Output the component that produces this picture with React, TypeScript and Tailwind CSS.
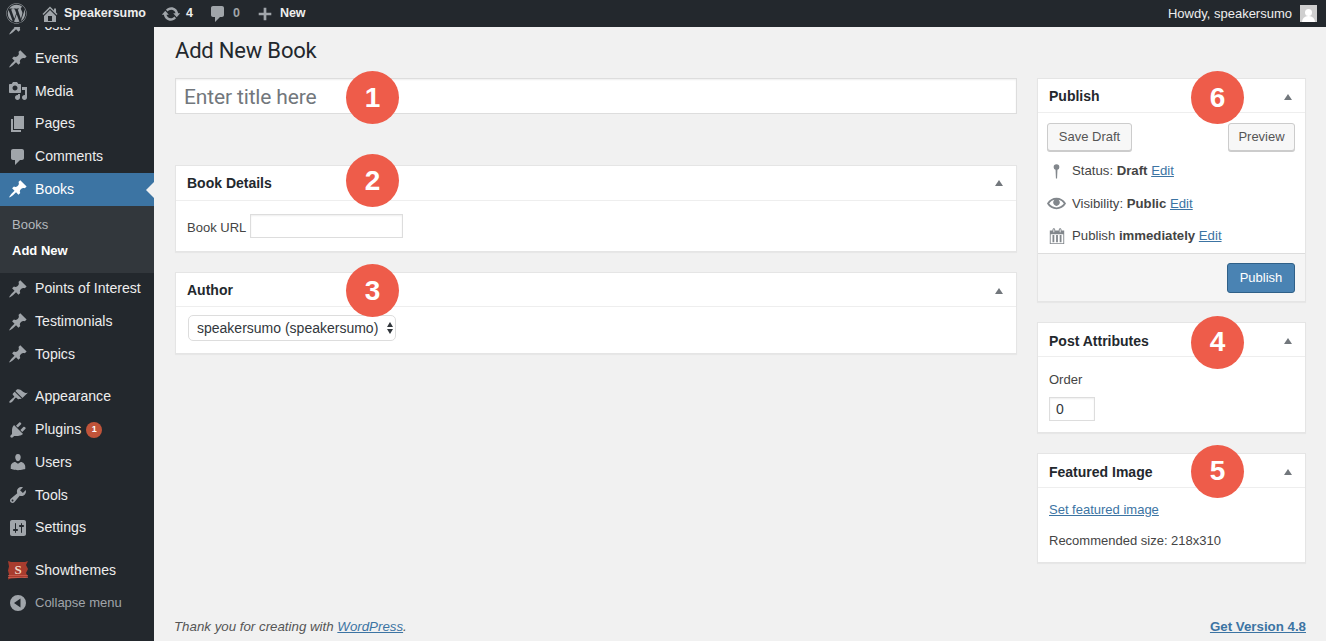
import React from "react";
import { FaWordpress } from "react-icons/fa";

const icons = {
  pin: "M10.44 3.02l1.82-1.82 6.36 6.35-1.83 1.82c-1.05-.68-2.48-.57-3.41.36l-.75.75c-.92.93-1.04 2.35-.35 3.41l-1.83 1.82-2.41-2.41-2.8 2.79c-.42.42-3.38 2.71-3.8 2.29s1.86-3.39 2.28-3.81l2.79-2.79L4.1 9.36l1.83-1.82c1.05.69 2.48.57 3.4-.36l.75-.75c.93-.92 1.05-2.35.36-3.41z",
  media: "M13 11V4c0-.55-.45-1-1-1h-1.67L9 1H5L3.67 3H2c-.55 0-1 .45-1 1v7c0 .55.45 1 1 1h10c.55 0 1-.45 1-1zM7 4.5c1.38 0 2.5 1.12 2.5 2.5S8.38 9.5 7 9.5 4.5 8.38 4.5 7 5.62 4.5 7 4.5zM14 6h5v10.5c0 1.38-1.12 2.5-2.5 2.5S14 17.88 14 16.5s1.12-2.5 2.5-2.5c.17 0 .34.02.5.05V9h-3V6zm-4 8.05V13h2v3.5c0 1.38-1.12 2.5-2.5 2.5S7 17.88 7 16.5 8.12 14 9.5 14c.17 0 .34.02.5.05z",
  page: "M6 15V2h10v13H6zm-1 1h8v2H3V5h2v11z",
  comment: "M5 2h9c1.1 0 2 .9 2 2v7c0 1.1-.9 2-2 2h-2l-5 5v-5H5c-1.1 0-2-.9-2-2V4c0-1.1.9-2 2-2z",
  brush: "M14.48 11.06L7.41 3.99l1.5-1.5c.5-.56 2.3-.47 3.51.32 1.21.8 1.43 1.28 2.91 2.1 1.18.64 2.45 1.26 4.45.85zm-.71.71L6.7 4.7 4.93 6.47c-.39.39-.39 1.02 0 1.41l1.06 1.06c.39.39.39 1.03 0 1.42-.6.6-1.43 1.11-2.21 1.69-.35.26-.7.53-1.01.84C1.43 13.71.96 15.12 1.37 15.53c.41.41 1.84-.06 3.36-1.38.3-.31.57-.66.84-1.01.57-.78 1.08-1.61 1.69-2.21.39-.39 1.02-.39 1.41 0l1.06 1.06c.39.39 1.02.39 1.41 0z",
  plugin: "M13.11 4.36L9.87 7.6 8 5.73l3.24-3.24c.35-.34 1.05-.2 1.56.32.52.51.66 1.21.31 1.55zm-8 1.77l.91-1.12 9.01 9.01-1.19.84c-.71.71-2.63 1.16-3.82 1.16H6.14L4.9 17.26c-.59.59-1.54.59-2.12 0-.59-.58-.59-1.53 0-2.12l1.24-1.24v-3.88c0-1.13.4-3.19 1.09-3.89zm7.26 3.97l3.24-3.24c.34-.35 1.04-.21 1.55.31.52.51.66 1.21.31 1.55l-3.24 3.25z",
  users: "M10 9.25c-2.27 0-2.73-3.44-2.73-3.44C7 4.02 7.82 2 9.97 2c2.16 0 2.98 2.02 2.71 3.81 0 0-.41 3.44-2.68 3.44zm0 2.57L12.72 10c2.39 0 4.52 2.33 4.52 4.53v2.49s-3.65 1.13-7.24 1.13c-3.65 0-7.24-1.13-7.24-1.13v-2.49c0-2.25 1.94-4.48 4.47-4.48z",
  tools: "M16.68 9.77c-1.34 1.34-3.3 1.67-4.95.99l-5.41 6.52c-.99.99-2.59.99-3.58 0s-.99-2.59 0-3.57l6.52-5.42c-.68-1.65-.35-3.61.99-4.95 1.28-1.28 3.12-1.62 4.72-1.06l-2.89 2.89 2.82 2.82 2.86-2.87c.53 1.58.18 3.39-1.08 4.65zM3.81 16.21c.4.39 1.04.39 1.43 0 .4-.4.4-1.04 0-1.43-.39-.4-1.03-.4-1.43 0-.39.39-.39 1.03 0 1.43z",
  settings: "M18 16V4c0-1.1-.9-2-2-2H4c-1.1 0-2 .9-2 2v12c0 1.1.9 2 2 2h12c1.1 0 2-.9 2-2zM8 11h1c.55 0 1 .45 1 1s-.45 1-1 1H8v1.5c0 .28-.22.5-.5.5s-.5-.22-.5-.5V13H6c-.55 0-1-.45-1-1s.45-1 1-1h1V5.5c0-.28.22-.5.5-.5s.5.22.5.5V11zm5-2h-1c-.55 0-1-.45-1-1s.45-1 1-1h1V5.5c0-.28.22-.5.5-.5s.5.22.5.5V7h1c.55 0 1 .45 1 1s-.45 1-1 1h-1v5.5c0 .28-.22.5-.5.5s-.5-.22-.5-.5V9z",
  home: "M16 8.5l1.53 1.53-1.06 1.06L10 4.62l-6.47 6.47-1.06-1.06L10 2.5l4 4v-2h2v4zm-6-2.46l6 5.99V18H4v-5.97zM12 17v-5H8v5h4z",
  update: "M10.2 3.28c3.53 0 6.43 2.61 6.92 6h2.08l-3.5 4-3.5-4h2.32c-.45-1.97-2.21-3.45-4.32-3.45-1.45 0-2.73.71-3.54 1.78L4.95 5.66C6.23 4.2 8.11 3.28 10.2 3.28zm-.4 13.44c-3.52 0-6.43-2.61-6.92-6H.8l3.5-4c1.17 1.33 2.33 2.67 3.5 4H5.48c.45 1.97 2.21 3.45 4.32 3.45 1.45 0 2.73-.71 3.54-1.78l1.71 1.95c-1.28 1.46-3.15 2.38-5.25 2.38z",
  plus: "M17 8.5v3h-5.5V17h-3v-5.5H3v-3h5.5V3h3v5.5z",
  eye: "M19.7 9.4C17.7 6 14 3.9 10 3.9S2.3 6 .3 9.4L0 10l.3.6c2 3.4 5.7 5.5 9.7 5.5s7.7-2.1 9.7-5.5l.3-.6-.3-.6zM10 14.1c-3.1 0-6-1.6-7.7-4.1C3.6 8 5.7 6.6 8 6.1c-.9.6-1.5 1.7-1.5 2.9 0 1.9 1.6 3.5 3.5 3.5s3.5-1.6 3.5-3.5c0-1.2-.6-2.3-1.5-2.9 2.3.5 4.4 1.9 5.7 3.9-1.7 2.5-4.6 4.1-7.7 4.1z",
  calendar: "M15 4h3v15H2V4h3V3c0-.41.15-.76.44-1.06.29-.29.65-.44 1.06-.44s.77.15 1.06.44c.29.3.44.65.44 1.06v1h4V3c0-.41.15-.76.44-1.06.29-.29.65-.44 1.06-.44s.77.15 1.06.44c.29.3.44.65.44 1.06v1zM6 3v2.5c0 .14.05.26.15.36.09.09.21.14.35.14s.26-.05.35-.14c.1-.1.15-.22.15-.36V3c0-.14-.05-.26-.15-.35-.09-.1-.21-.15-.35-.15s-.26.05-.35.15c-.1.09-.15.21-.15.35zm7 0v2.5c0 .14.05.26.14.36.1.09.22.14.36.14s.26-.05.36-.14c.09-.1.14-.22.14-.36V3c0-.14-.05-.26-.14-.35-.1-.1-.22-.15-.36-.15s-.26.05-.36.15c-.09.09-.14.21-.14.35zm4 15V8H3v10h14zM5 9h2v8H5zm4 0h2v8H9zm4 0h2v8h-2z",
  pushpin: "M7 6a3 3 0 1 1 6 0 3 3 0 0 1-2 2.8L10.6 18H9.400L9 8.800A3 3 0 0 1 7 6z",
  collapse: "M10 2a8 8 0 1 1 0 16 8 8 0 0 1 0-16zm2.5 3.500L6 10l6.500 4.500z",
};

type IconName = keyof typeof icons;

const Icon = ({ name, className }: { name: IconName; className: string }) => (
  <svg viewBox="0 0 20 20" fill="currentColor" fillRule="evenodd" className={className}>
    <path d={icons[name]} />
  </svg>
);

const MenuItem = ({ icon, label, active, badge }: { icon: IconName; label: string; active?: boolean; badge?: string }) => (
  <div className={`relative flex h-[32.7px] items-center text-[14.1px] ${active ? "bg-[#3c74a3] text-white" : "text-[#eeeeee]"}`}>
    <div className="flex w-[35px] shrink-0 justify-center pl-[1px]">
      <Icon name={icon} className={`size-5 ${active ? "text-white" : "text-[#a0a5aa]"}`} />
    </div>
    <span>{label}</span>
    {badge && (
      <span className="ml-[5px] flex size-[16px] items-center justify-center rounded-full bg-[#c1543a] text-[9px] font-bold text-white">
        {badge}
      </span>
    )}
    {active && (
      <div className="absolute right-0 top-[9px] size-0 border-y-[8px] border-r-[8px] border-y-transparent border-r-[#f1f1f1]" />
    )}
  </div>
);

const Sidebar = () => (
  <aside className="flex w-[154px] shrink-0 flex-col overflow-hidden bg-[#23282d]">
    <div className="-mt-[17.5px]">
      <MenuItem icon="pin" label="Posts" />
    </div>
    <MenuItem icon="pin" label="Events" />
    <MenuItem icon="media" label="Media" />
    <MenuItem icon="page" label="Pages" />
    <MenuItem icon="comment" label="Comments" />
    <MenuItem icon="pin" label="Books" active />
    <div className="flex h-[67px] flex-col bg-[#32373c] pl-3 pt-[8px] text-[13px]">
      <div className="h-[26px] leading-[22px] text-[#b4b9be]">Books</div>
      <div className="font-bold leading-[22px] text-white">Add New</div>
    </div>
    <MenuItem icon="pin" label="Points of Interest" />
    <MenuItem icon="pin" label="Testimonials" />
    <MenuItem icon="pin" label="Topics" />
    <div className="h-[10px]" />
    <MenuItem icon="brush" label="Appearance" />
    <MenuItem icon="plugin" label="Plugins" badge="1" />
    <MenuItem icon="users" label="Users" />
    <MenuItem icon="tools" label="Tools" />
    <MenuItem icon="settings" label="Settings" />
    <div className="h-[10px]" />
    <div className="flex h-[32.7px] items-center text-[14px] text-[#eeeeee]">
      <div className="flex w-[35px] shrink-0 justify-center">
        <svg viewBox="0 0 20 20" className="size-5">
          <path d="M0 1l3 1h14l3-1-2 4 2 4-2 4 2 4-3 1-3-.5-4 .5-7 .5-3 1 1-5-1-4 1-4z" fill="#a83c2e" />
          <path d="M0 15.5h20M0 17.5h20" stroke="#d9695a" strokeWidth="0.6" />
          <text x="10" y="14" textAnchor="middle" fontFamily="Liberation Serif" fontWeight="700" fontSize="13" fill="#f0d9c8">
            S
          </text>
        </svg>
      </div>
      <span>Showthemes</span>
    </div>
    <div className="flex h-[32.7px] items-center text-[13px] text-[#a0a5aa]">
      <div className="flex w-[35px] shrink-0 justify-center">
        <Icon name="collapse" className="size-5 text-[#a0a5aa]" />
      </div>
      <span>Collapse menu</span>
    </div>
  </aside>
);

const TopBar = () => (
  <header className="flex h-[27px] shrink-0 items-center justify-between bg-[#23282d] text-[12.5px] text-[#eeeeee]">
    <div className="flex items-center">
      <FaWordpress className="ml-[6px] size-[21px] text-[#a0a5aa]" />
      <Icon name="home" className="ml-[13px] size-5 text-[#a0a5aa]" />
      <span className="ml-[4px] font-bold">Speakersumo</span>
      <Icon name="update" className="ml-[15px] size-5 text-[#a0a5aa]" />
      <span className="ml-[5px] font-bold">4</span>
      <Icon name="comment" className="ml-[15px] size-5 text-[#a0a5aa]" />
      <span className="ml-[5px] font-bold text-[#a0a5aa]">0</span>
      <Icon name="plus" className="ml-[16px] size-[18px] text-[#a0a5aa]" />
      <span className="ml-[6px] font-bold">New</span>
    </div>
    <div className="flex items-center pr-[9px]">
      <span className="text-[13px]">Howdy, speakersumo</span>
      <div className="ml-[8px] flex size-[17px] flex-col items-center justify-end overflow-hidden bg-[#cfcfcf]">
        <div className="size-[7px] rounded-full bg-white" />
        <div className="h-[6px] w-[13px] rounded-t-full bg-white" />
      </div>
    </div>
  </header>
);

const Badge = ({ n, left, top }: { n: number; left: string; top: string }) => (
  <div className={`absolute z-10 flex size-[53px] items-center justify-center rounded-full bg-[#ee5c4a] text-[28px] font-bold text-white ${left} ${top}`}>
    {n}
  </div>
);

const Card = ({ title, children, badge, headerH = "h-[34px] pt-[2px]" }: { title: string; children: React.ReactNode; badge: React.ReactNode; headerH?: string }) => (
  <section className="relative border border-[#e5e5e5] bg-white shadow-[0_1px_1px_rgba(0,0,0,0.04)]">
    <div className={`flex items-center justify-between border-b border-[#eeeeee] pl-[11px] pr-[13px] ${headerH}`}>
      <h2 className="text-[14px] font-bold text-[#23282d]">{title}</h2>
      <div className="size-0 border-x-[4px] border-b-[6px] border-x-transparent border-b-[#72777c]" />
    </div>
    {badge}
    {children}
  </section>
);

const Button = ({ children, className }: { children: React.ReactNode; className: string }) => (
  <button className={`h-[28px] rounded-[3px] border border-[#cccccc] bg-[#f7f7f7] text-[13px] text-[#555555] shadow-[0_1px_0_#cccccc] ${className}`}>
    {children}
  </button>
);

const Link = ({ children }: { children: React.ReactNode }) => <a className="text-[#3c74a3] underline">{children}</a>;

const StatusRow = ({ icon, iconClass, children }: { icon: IconName; iconClass: string; children: React.ReactNode }) => (
  <div className="flex h-[32.5px] items-center text-[13.2px] text-[#444444]">
    <div className="mr-[6px] flex w-[19px] shrink-0 justify-center">
      <Icon name={icon} className={`text-[#82878c] ${iconClass}`} />
    </div>
    <span className="whitespace-nowrap">{children}</span>
  </div>
);

const LeftColumn = () => (
  <div className="flex w-[842px] shrink-0 flex-col">
    <div className="relative">
      <input
        placeholder="Enter title here"
        className="h-[36px] w-full border border-[#dddddd] bg-white px-2 pt-[2px] font-['Roboto',sans-serif] text-[21px] tracking-[-0.15px] shadow-[inset_0_1px_2px_rgba(0,0,0,0.07)] placeholder:text-[#72777c]"
      />
      <Badge n={1} left="left-[171px]" top="-top-[7px]" />
    </div>
    <div className="mt-[51px] flex flex-col gap-5">
      <Card title="Book Details" headerH="h-[35px]" badge={<Badge n={2} left="left-[170px]" top="-top-[12px]" />}>
        <div className="flex h-[50px] items-center pl-[11px] text-[13px] text-[#444444]">
          <label className="mt-[4px]">Book URL</label>
          <input className="ml-[4px] h-[24px] w-[153px] border border-[#dddddd] shadow-[inset_0_1px_2px_rgba(0,0,0,0.07)]" />
        </div>
      </Card>
      <Card title="Author" badge={<Badge n={3} left="left-[170px]" top="-top-[9px]" />}>
        <div className="h-[46px] pl-3 pt-[8px]">
          <div className="relative w-[208px]">
            <select className="h-[26px] w-full appearance-none rounded-[5px] border border-[#dddddd] bg-white pl-2 text-[14px] text-[#32373c]">
              <option>speakersumo (speakersumo)</option>
            </select>
            <div className="absolute right-[3px] top-[7px] flex flex-col gap-[2px]">
              <div className="size-0 border-x-[3px] border-b-[5px] border-x-transparent border-b-[#32373c]" />
              <div className="size-0 border-x-[3px] border-t-[5px] border-x-transparent border-t-[#32373c]" />
            </div>
          </div>
        </div>
      </Card>
    </div>
  </div>
);

const RightColumn = () => (
  <div className="ml-[20px] flex w-[269px] shrink-0 flex-col gap-5">
    <Card title="Publish" badge={<Badge n={6} left="left-[153px]" top="-top-[8px]" />}>
      <div className="flex justify-between pl-[9px] pr-[10px] pt-[10px]">
        <Button className="w-[85px]">Save Draft</Button>
        <Button className="w-[67px]">Preview</Button>
      </div>
      <div className="mt-[4px] pl-[9px]">
        <StatusRow icon="pushpin" iconClass="size-5">
          Status: <b>Draft</b> <Link>Edit</Link>
        </StatusRow>
        <StatusRow icon="eye" iconClass="size-[19px]">
          Visibility: <b>Public</b> <Link>Edit</Link>
        </StatusRow>
        <StatusRow icon="calendar" iconClass="size-[18px]">
          Publish <b>immediately</b> <Link>Edit</Link>
        </StatusRow>
      </div>
      <div className="flex h-[48px] items-center justify-end border-t border-[#dddddd] bg-[#f5f5f5] pr-[10px] pt-[2px]">
        <button className="h-[30px] w-[68px] rounded-[3px] border border-[#2f6088] bg-[#4a83b3] text-[13px] text-white">
          Publish
        </button>
      </div>
    </Card>
    <Card title="Post Attributes" headerH="h-[34px] pt-[4px]" badge={<Badge n={4} left="left-[153px]" top="-top-[7px]" />}>
      <div className="h-[75px] pl-[11px] pt-[15px] text-[13px] text-[#444444]">
        <div className="leading-[16px]">Order</div>
        <input
          defaultValue="0"
          className="mt-[9px] block h-[24px] w-[46px] border border-[#dddddd] pl-[6px] text-[14px] text-[#32373c] shadow-[inset_0_1px_2px_rgba(0,0,0,0.07)]"
        />
      </div>
    </Card>
    <Card title="Featured Image" headerH="h-[34px] pt-[4px]" badge={<Badge n={5} left="left-[153px]" top="-top-[9px]" />}>
      <div className="h-[74px] pl-[11px] pt-[14px] text-[13px] leading-[16px] text-[#444444]">
        <Link>Set featured image</Link>
        <div className="mt-[15px]">Recommended size: 218x310</div>
      </div>
    </Card>
  </div>
);

export default function App() {
  return (
    <div className="flex h-screen flex-col overflow-hidden bg-[#f1f1f1] font-['Liberation_Sans',sans-serif]">
      <TopBar />
      <div className="flex min-h-0 flex-1">
        <Sidebar />
        <main className="flex min-w-0 flex-1 flex-col pl-[21px] pr-[20px]">
          <h1 className="flex h-[51px] shrink-0 items-center pb-[4px] font-['Roboto',sans-serif] text-[22px] tracking-[-0.2px] text-[#23282d]">Add New Book</h1>
          <div className="flex flex-1">
            <LeftColumn />
            <RightColumn />
          </div>
          <footer className="flex h-[30px] shrink-0 items-start justify-between pt-[6px] text-[13.3px] text-[#555555]">
            <span className="-ml-[1px] italic">
              Thank you for creating with <Link>WordPress</Link>.
            </span>
            <a className="font-bold text-[#3c74a3] underline">Get Version 4.8</a>
          </footer>
        </main>
      </div>
    </div>
  );
}
